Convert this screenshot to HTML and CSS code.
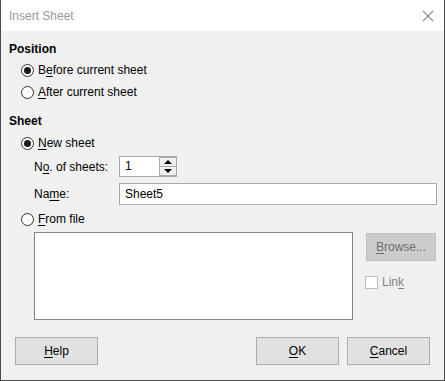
FILE: index.html
```html
<!DOCTYPE html>
<html lang="en">
<head>
    <meta charset="UTF-8">
    <title>Insert Sheet</title>
    <link rel="stylesheet" href="styles.css">
</head>
<body>
    <div class="window">
        <div class="titlebar">
            <span class="title">Insert Sheet</span>
            <svg class="close" width="12" height="12" viewBox="0 0 12 12">
                <path d="M1 1 L11 11 M11 1 L1 11" stroke="#8a8a8a" stroke-width="1.1" fill="none"/>
            </svg>
        </div>

        <div class="content">
            <div class="heading">Position</div>
            <label class="radio-row"><span class="radio checked"></span>B<u>e</u>fore current sheet</label>
            <label class="radio-row"><span class="radio"></span><u>A</u>fter current sheet</label>

            <div class="heading sheet-heading">Sheet</div>
            <label class="radio-row new-sheet"><span class="radio checked"></span><u>N</u>ew sheet</label>

            <div class="field-row count-row">
                <span class="field-label">N<u>o</u>. of sheets:</span>
                <div class="spin">
                    <span class="spin-value">1</span>
                    <div class="spin-buttons">
                        <span class="spin-btn"><span class="arrow up"></span></span>
                        <span class="spin-btn"><span class="arrow down"></span></span>
                    </div>
                </div>
            </div>

            <div class="field-row name-row">
                <span class="field-label">Na<u>m</u>e:</span>
                <div class="text-input">Sheet5</div>
            </div>

            <label class="radio-row from-file"><span class="radio"></span><u>F</u>rom file</label>

            <div class="file-area">
                <div class="file-list"></div>
                <div class="file-side">
                    <div class="btn disabled"><u>B</u>rowse...</div>
                    <label class="check-row"><span class="checkbox"></span>Lin<u>k</u></label>
                </div>
            </div>
        </div>

        <div class="footer">
            <div class="btn"><u>H</u>elp</div>
            <div class="footer-right">
                <div class="btn"><u>O</u>K</div>
                <div class="btn"><u>C</u>ancel</div>
            </div>
        </div>
    </div>
</body>
</html>
```

FILE: styles.css
```css
body {
    margin: 0;
    font-family: 'Liberation Sans', Arial, sans-serif;
    font-size: 12px;
    color: #000;
}

.window {
    width: 445px;
    height: 381px;
    box-sizing: border-box;
    background: #f0f0f0;
    border: 1px solid #4d4d4d;
    border-top: none;
}

.titlebar {
    height: 31px;
    background: #fff;
    display: flex;
    align-items: center;
    justify-content: space-between;
    padding: 0 9px 0 8px;
}

.title {
    color: #999;
}

.close {
    margin-right: 1px;
}

.content {
    padding: 10px 0 0 8px;
}

.heading {
    font-weight: bold;
    line-height: 16px;
    height: 16px;
}

.sheet-heading {
    margin-top: 10px;
}

u {
    text-decoration-thickness: 1px;
    text-underline-offset: 2px;
}

.radio-row {
    display: flex;
    align-items: center;
    height: 22px;
    padding-left: 12px;
}

.radio-row:first-of-type {
    margin-top: 2px;
}

.new-sheet,
.from-file {
    margin-top: 3px;
}

.radio {
    width: 11px;
    height: 11px;
    border: 1px solid #333;
    border-radius: 50%;
    background: #fff;
    margin-right: 4px;
    display: flex;
    align-items: center;
    justify-content: center;
}

.radio.checked::after {
    content: "";
    width: 7px;
    height: 7px;
    border-radius: 50%;
    background: #1a1a1a;
}

.field-row {
    display: flex;
    align-items: center;
    padding-left: 25px;
}

.count-row {
    margin-top: 2px;
    height: 21px;
}

.name-row {
    margin-top: 6px;
    height: 22px;
}

.field-label {
    width: 85px;
}

.spin {
    display: flex;
    width: 58px;
    height: 21px;
    box-sizing: border-box;
    border: 1px solid #a8a8a8;
    background: #fff;
}

.spin-value {
    flex: 1;
    padding-left: 5px;
    line-height: 19px;
}

.spin-buttons {
    width: 17px;
    display: flex;
    flex-direction: column;
}

.spin-btn {
    flex: 1;
    display: flex;
    align-items: center;
    justify-content: center;
    background: #f0f0f0;
    border: 1px solid #adadad;
    border-right: none;
}

.spin-btn + .spin-btn {
    border-top: none;
}

.arrow {
    width: 0;
    height: 0;
    border-left: 4px solid transparent;
    border-right: 4px solid transparent;
}

.arrow.up {
    border-bottom: 4px solid #000;
}

.arrow.down {
    border-top: 4px solid #000;
}

.text-input {
    width: 318px;
    height: 22px;
    box-sizing: border-box;
    border: 1px solid #a8a8a8;
    background: #fff;
    padding-left: 5px;
    line-height: 20px;
}

.file-area {
    display: flex;
    margin-top: 2px;
    padding-left: 25px;
}

.file-list {
    width: 319px;
    height: 88px;
    box-sizing: border-box;
    border: 1px solid #82878f;
    background: #fff;
}

.file-side {
    margin-left: 13px;
    padding-top: 1px;
}

.btn {
    width: 83px;
    height: 28px;
    box-sizing: border-box;
    border: 1px solid #adadad;
    background: #e1e1e1;
    display: flex;
    align-items: center;
    justify-content: center;
}

.btn.disabled {
    width: 70px;
    background: #cccccc;
    border-color: #bfbfbf;
    color: #6d6d6d;
}

.check-row {
    display: flex;
    align-items: center;
    margin-top: 14px;
    margin-left: -1px;
    color: #838383;
}

.checkbox {
    width: 11px;
    height: 11px;
    border: 1px solid #bcbcbc;
    background: #fff;
    margin-right: 4px;
}

.footer {
    display: flex;
    justify-content: space-between;
    padding: 17px 14px 0 14px;
}

.footer-right {
    display: flex;
    gap: 8px;
}
```
